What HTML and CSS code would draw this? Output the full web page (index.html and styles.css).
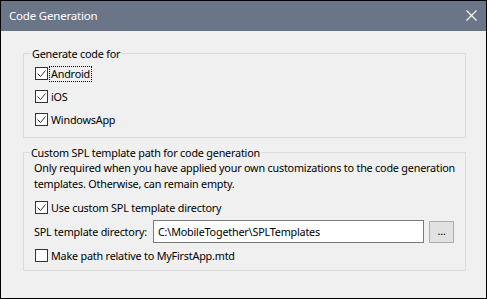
FILE: index.html
```html
<!DOCTYPE html>
<html>
<head>
<meta charset="utf-8">
<link rel="stylesheet" href="styles.css">
</head>
<body>
<div class="window">
  <div class="titlebar">
    <span class="title">Code Generation</span>
    <svg class="close" width="11" height="11" viewBox="0 0 11 11"><path d="M0.5 0.5 L10.5 10.5 M10.5 0.5 L0.5 10.5" stroke="#fff" stroke-width="1.1" fill="none"/></svg>
  </div>
  <div class="content">
    <fieldset class="group g1">
      <legend>Generate code for</legend>
      <div class="check"><span class="box"><svg width="11" height="11" viewBox="0 0 11 11"><path d="M1.5 5.5 L4.5 8.5 L9.5 2.5" stroke="#333" stroke-width="1" fill="none"/></svg></span><span class="lbl focus">Android</span></div>
      <div class="check"><span class="box"><svg width="11" height="11" viewBox="0 0 11 11"><path d="M1.5 5.5 L4.5 8.5 L9.5 2.5" stroke="#333" stroke-width="1" fill="none"/></svg></span><span class="lbl">iOS</span></div>
      <div class="check"><span class="box"><svg width="11" height="11" viewBox="0 0 11 11"><path d="M1.5 5.5 L4.5 8.5 L9.5 2.5" stroke="#333" stroke-width="1" fill="none"/></svg></span><span class="lbl">WindowsApp</span></div>
    </fieldset>
    <fieldset class="group g2">
      <legend>Custom SPL template path for code generation</legend>
      <p class="desc">Only required when you have applied your own customizations to the code generation<br>templates. Otherwise, can remain empty.</p>
      <div class="check c-use"><span class="box"><svg width="11" height="11" viewBox="0 0 11 11"><path d="M1.5 5.5 L4.5 8.5 L9.5 2.5" stroke="#333" stroke-width="1" fill="none"/></svg></span><span class="lbl">Use custom SPL template directory</span></div>
      <div class="dirrow">
        <span class="dirlabel">SPL template directory:</span>
        <div class="input">C:\MobileTogether\SPLTemplates</div>
        <div class="browse">...</div>
      </div>
      <div class="check"><span class="box"></span><span class="lbl">Make path relative to MyFirstApp.mtd</span></div>
    </fieldset>
  </div>
</div>
</body>
</html>
```
FILE: styles.css
```css
* { box-sizing: border-box; }
html, body { margin: 0; padding: 0; }
body {
  font-family: "Noto Sans", "Open Sans", sans-serif;
  font-size: 10.8px;
  letter-spacing: -0.2px;
  color: #000;
  background: #f0f0f0;
  white-space: nowrap;
}
.window {
  width: 487px;
  height: 299px;
  border: 1px solid #000;
  background: #f0f0f0;
  display: flex;
  flex-direction: column;
  overflow: hidden;
}
.titlebar {
  flex: none;
  height: 30px;
  background: #6a7688;
  display: flex;
  align-items: center;
  justify-content: space-between;
  padding: 0 9px 0 8px;
}
.title {
  color: #fff;
  font-size: 11.5px;
  letter-spacing: -0.2px;
  line-height: 16px;
  margin-top: -1px;
}
.close { display: block; margin-top: -1px; }
.content {
  flex: none;
  padding: 15px 20px 0 22px;
  display: flex;
  flex-direction: column;
}
.group {
  margin: 0;
  border: 1px solid #dcdcdc;
  min-width: 0;
}
.group legend {
  padding: 0 1px;
  margin-left: -4px;
  line-height: 15px;
}
.g1 { padding: 1px 11px 6px 11px; }
.g2 { margin-top: 7px; padding: 0 11px 3px 10px; }
.check {
  height: 23px;
  display: flex;
  align-items: center;
}
.box {
  width: 13px;
  height: 13px;
  border: 1px solid #333;
  background: #fff;
  flex: none;
  display: flex;
}
.box svg { display: block; }
.lbl { margin-left: 1px; line-height: 14px; padding: 0 1px; border: 1px solid transparent; }
.lbl.focus { border: 1px dotted #000; }
.g2 .check { margin-left: 1px; }
.desc {
  margin: 0;
  line-height: 16px;
  padding-left: 0;
}
.c-use { margin-top: 4px; }
.dirrow {
  margin-top: 1px;
  display: flex;
  align-items: flex-start;
}
.dirlabel { line-height: 23px; width: 119px; flex: none; }
.input {
  width: 275px;
  height: 23px;
  border: 1px solid #7a7a7a;
  background: #fff;
  line-height: 21px;
  padding-left: 4px;
}
.browse {
  margin-left: 5px;
  margin-top: 1px;
  width: 25px;
  height: 22px;
  border: 1px solid #adadad;
  background: #e1e1e1;
  text-align: center;
  line-height: 18px;
}
.dirrow + .check { margin-top: 1px; }
```
